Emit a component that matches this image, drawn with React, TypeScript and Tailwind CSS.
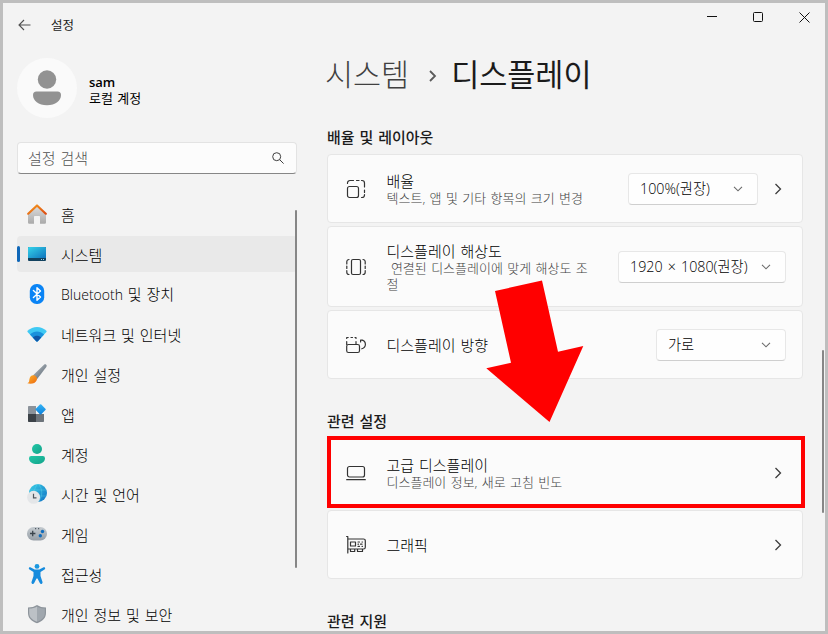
import type { ReactNode } from "react";

type NavItem = {
  id: string;
  label: ReactNode;
  icon: ReactNode;
  active?: boolean;
};

const navItems: NavItem[] = [
  { id: "home", label: "홈", icon: <HomeIcon /> },
  { id: "system", label: "시스템", icon: <SystemIcon />, active: true },
  {
    id: "bluetooth",
    label: (
      <>
        <span className="text-[14px]">Bluetooth</span> 및 장치
      </>
    ),
    icon: <BluetoothIcon />,
  },
  { id: "network", label: "네트워크 및 인터넷", icon: <NetworkIcon /> },
  { id: "personalization", label: "개인 설정", icon: <BrushIcon /> },
  { id: "apps", label: "앱", icon: <AppsIcon /> },
  { id: "accounts", label: "계정", icon: <AccountIcon /> },
  { id: "time", label: "시간 및 언어", icon: <TimeIcon /> },
  { id: "gaming", label: "게임", icon: <GameIcon /> },
  { id: "accessibility", label: "접근성", icon: <AccessibilityIcon /> },
  { id: "privacy", label: "개인 정보 및 보안", icon: <ShieldIcon /> },
];

function HomeIcon() {
  return (
    <svg width="20" height="20" viewBox="0 0 20 20">
      <defs>
        <linearGradient id="homeWall" x1="0" y1="0" x2="0" y2="1">
          <stop offset="0" stopColor="#dedede" />
          <stop offset="1" stopColor="#aaaaaa" />
        </linearGradient>
        <linearGradient id="homeRoof" x1="0" y1="0" x2="1" y2="1">
          <stop offset="0" stopColor="#f59a1d" />
          <stop offset="1" stopColor="#dd4b12" />
        </linearGradient>
      </defs>
      <path
        d="M1 9.5 10 1.5l9 8V18.5a1.2 1.2 0 0 1-1.2 1.2H13v-6.9a.8.8 0 0 0-.8-.8H7.8a.8.8 0 0 0-.8.8v6.9H2.2A1.2 1.2 0 0 1 1 18.5Z"
        fill="url(#homeWall)"
      />
      <path
        d="M1.2 9.7 10 1.5l8.8 8.2"
        fill="none"
        stroke="url(#homeRoof)"
        strokeWidth="2.2"
        strokeLinecap="round"
        strokeLinejoin="round"
      />
    </svg>
  );
}

function SystemIcon() {
  return (
    <svg width="20" height="20" viewBox="0 0 20 20">
      <defs>
        <linearGradient id="screen" x1="0" y1="0" x2="1" y2="1">
          <stop offset="0" stopColor="#35d3ea" />
          <stop offset="1" stopColor="#0f74bd" />
        </linearGradient>
      </defs>
      <rect x="1" y="3" width="18" height="14" rx="1" fill="#12425f" />
      <path d="M2 3h16a1 1 0 0 1 1 1v10H1V4a1 1 0 0 1 1-1Z" fill="url(#screen)" />
      <path d="M14 15h1v1h-1zM16 15h1v1h-1z" fill="#9ed4ea" />
    </svg>
  );
}

function BluetoothIcon() {
  return (
    <svg width="20" height="20" viewBox="0 0 20 20">
      <rect x="2.800" y="0" width="14.400" height="20" rx="6.800" fill="#0a84f5" />
      <path
        d="M6.400 6.500 13.500 13 10 16.300V3.700L13.500 7l-7.100 6.500"
        fill="none"
        stroke="#fff"
        strokeWidth="1.400"
        strokeLinejoin="round"
        strokeLinecap="round"
      />
    </svg>
  );
}

function NetworkIcon() {
  return (
    <svg width="20" height="20" viewBox="0 0 20 20">
      <path
        d="M.6 6.800C5.700 1.700 14.300 1.700 19.400 6.800a.9.9 0 0 1 0 1.200L11 17a1.400 1.400 0 0 1-2 0L.6 8a.9.9 0 0 1 0-1.200Z"
        fill="#3fc9f3"
      />
      <path d="M3 10.400c4-4 10-4 14 0L11 17a1.400 1.400 0 0 1-2 0Z" fill="#1a91dc" />
      <path d="M5.800 13.500c2.300-2.400 6.100-2.400 8.400 0L11 17a1.400 1.400 0 0 1-2 0Z" fill="#0f57a8" />
    </svg>
  );
}

function BrushIcon() {
  return (
    <svg width="20" height="20" viewBox="0 0 20 20">
      <defs>
        <linearGradient id="handle" x1="0" y1="0" x2="1" y2="1">
          <stop offset="0" stopColor="#b8c0c7" />
          <stop offset="1" stopColor="#596570" />
        </linearGradient>
        <linearGradient id="bristle" x1="0" y1="0" x2="1" y2="1">
          <stop offset="0" stopColor="#ffb52b" />
          <stop offset="1" stopColor="#ec6810" />
        </linearGradient>
      </defs>
      <path d="M5.900 11.400 17 .8c1.600-1.300 3.500.5 2.300 2.100L10.200 15Z" fill="url(#handle)" />
      <path
        d="M6.400 11.200c2.800.2 4.300 2.600 3.300 5C8.400 19.500 4.200 20.300.3 19.300c2.200-1 1.700-2 2.100-4 .5-2.700 1.900-4.200 4-4.100Z"
        fill="url(#bristle)"
      />
    </svg>
  );
}

function AppsIcon() {
  return (
    <svg width="20" height="20" viewBox="0 0 20 20">
      <defs>
        <linearGradient id="appTile" x1="0" y1="0" x2="1" y2="1">
          <stop offset="0" stopColor="#36b5f5" />
          <stop offset="1" stopColor="#0a7fdc" />
        </linearGradient>
      </defs>
      <path d="M1 2.700A.8.8 0 0 1 1.800 2H9v8H1Z" fill="#8b929a" />
      <path d="M1 10h8v8H1.800a.8.8 0 0 1-.8-.8Z" fill="#3c4248" />
      <path d="M9 10h8v7.200a.8.8 0 0 1-.8.8H9Z" fill="#6d747b" />
      <rect x="9.700" y="1.500" width="7.800" height="7.800" rx="1" transform="rotate(45 13.600 5.400)" fill="url(#appTile)" />
    </svg>
  );
}

function AccountIcon() {
  return (
    <svg width="20" height="20" viewBox="0 0 20 20">
      <defs>
        <linearGradient id="person" x1="0" y1="0" x2="1" y2="1">
          <stop offset="0" stopColor="#22c7a6" />
          <stop offset="1" stopColor="#14a38b" />
        </linearGradient>
      </defs>
      <circle cx="10" cy="5" r="5" fill="url(#person)" />
      <path
        d="M4.200 12h11.600A2.200 2.200 0 0 1 18 14.200C18 18 14.500 20 10 20s-8-2-8-5.800A2.200 2.200 0 0 1 4.200 12Z"
        fill="url(#person)"
      />
    </svg>
  );
}

function TimeIcon() {
  return (
    <svg width="20" height="20" viewBox="0 0 20 20">
      <defs>
        <linearGradient id="globe" x1="0" y1="0" x2="1" y2="1">
          <stop offset="0" stopColor="#3bd0e6" />
          <stop offset="1" stopColor="#1272c4" />
        </linearGradient>
      </defs>
      <circle cx="11" cy="9" r="9" fill="url(#globe)" />
      <path
        d="M3 6h16M3 12h16M11 0c-5 4-5 13 0 18M11 0c5 4 5 13 0 18"
        fill="none"
        stroke="#69dcee"
        strokeWidth=".6"
        opacity=".6"
      />
      <circle cx="6.600" cy="13.300" r="6.500" fill="#e4e6e8" />
      <path d="M6.500 9.800v4h3" fill="none" stroke="#50565c" strokeWidth="1.200" />
    </svg>
  );
}

function GameIcon() {
  return (
    <svg width="20" height="20" viewBox="0 0 20 20">
      <defs>
        <linearGradient id="pad" x1="0" y1="0" x2="0" y2="1">
          <stop offset="0" stopColor="#c5cbd0" />
          <stop offset="1" stopColor="#969ea6" />
        </linearGradient>
      </defs>
      <rect x="0" y="3" width="20" height="13.500" rx="6.500" fill="url(#pad)" />
      <path d="M5.700 6.800v5.400M3 9.500h5.400" stroke="#3b444c" strokeWidth="1.300" />
      <path d="M8 4h1.200v1.200H8zM11 4h1.200v1.200H11z" fill="#535d66" />
      <circle cx="15.500" cy="7.500" r="1.700" fill="#0f6cbd" />
      <circle cx="13.300" cy="11.800" r="1.700" fill="#0f6cbd" />
    </svg>
  );
}

function AccessibilityIcon() {
  return (
    <svg width="20" height="20" viewBox="0 0 20 20">
      <circle cx="10" cy="2.400" r="2.400" fill="#1b98e0" />
      <path
        d="M3.400 3.300 7.700 5.500h4.600l4.300-2.200c1.500-.5 2.200 1.500.9 2.200L13.500 8v4l2 6c.4 1.900-1.900 2.700-2.700.9L10.500 14.500h-1L7.200 18.900c-.8 1.800-3.100 1-2.700-.9L6.500 12V8L2.500 5.500c-1.300-.7-.6-2.700.9-2.200Z"
        fill="#168bdd"
      />
    </svg>
  );
}

function ShieldIcon() {
  return (
    <svg width="20" height="20" viewBox="0 0 20 20">
      <path
        d="M10 1c2.600 1.700 5.500 2.500 9 2.500V9c0 5-3.500 8.300-9 10.200C4.500 17.300 1 14 1 9V3.500C4.500 3.500 7.400 2.700 10 1Z"
        fill="#8d949b"
      />
      <path d="M10 2.400v15.400C5.200 16 2.200 13.300 2.200 9V4.600C5.200 4.500 7.700 3.800 10 2.400Z" fill="#bcc1c6" />
      <path d="M10 2.400v15.400c4.800-1.800 7.800-4.500 7.800-8.800V4.600c-3-.1-5.500-.8-7.800-2.200Z" fill="#a0a7ae" />
    </svg>
  );
}

function LineIcon({ children }: { children: ReactNode }) {
  return (
    <svg
      width="20"
      height="20"
      viewBox="0 0 20 20"
      fill="none"
      stroke="#333"
      strokeWidth="1.200"
      strokeLinecap="round"
      strokeLinejoin="round"
    >
      {children}
    </svg>
  );
}

function ScaleIcon() {
  return (
    <LineIcon>
      <rect x="1.500" y="7.500" width="11" height="11" rx="2" />
      <path d="M1.500 4.500V4A2.500 2.500 0 0 1 4 1.500h3.500M10.500 1.500H13M15.500 1.500h.5A2.500 2.500 0 0 1 18.500 4v4M18.500 11v2.500M18.500 15.500v.5a2.500 2.500 0 0 1-2.500 2.500h-.5" />
    </LineIcon>
  );
}

function ResolutionIcon() {
  return (
    <LineIcon>
      <rect x="5.500" y="2.500" width="9" height="15" rx="1.500" />
      <path d="M3 2.500A2.200 2.200 0 0 0 .8 4.700V7M.8 9v2.500M.8 13.500v1.800A2.200 2.200 0 0 0 3 17.500M17 2.500a2.200 2.200 0 0 1 2.200 2.200V7M19.200 9v2.500M19.200 13.500v1.800a2.200 2.200 0 0 1-2.200 2.200" />
    </LineIcon>
  );
}

function OrientationIcon() {
  return (
    <LineIcon>
      <rect x=".7" y="9.500" width="12.800" height="8" rx="1.800" />
      <path d="M.7 9.500V6.500M.7 3.500V2.500h1.500M5 2.500h1.500M9 2.500h1v1M10 6.500v2.500" />
      <path d="M14.600 7V5h2M14.800 5.200c2.500-.4 4.600 1.200 4.600 4 0 2.300-1.400 3.900-3.600 4.600" />
    </LineIcon>
  );
}

function LaptopIcon() {
  return (
    <LineIcon>
      <rect x="1.500" y="3.500" width="17" height="10.500" rx="2" />
      <path d="M.7 16.700h18.600" />
    </LineIcon>
  );
}

function GraphicsIcon() {
  return (
    <LineIcon>
      <path d="M.6 1.500h1.200v16.500M1.800 4h15.700a1.800 1.800 0 0 1 1.800 1.800v6.400a1.800 1.800 0 0 1-1.800 1.800H1.800M4.500 14v2.500h4.200V14M11.500 14v2.500h5V14" />
      <rect x="4.500" y="7" width="5" height="4" />
      <path d="M12 7h1.500M16 7h.5M12 9.200h.5M14.500 9.200H16M12 11.300h1.500M16 11.300h.5" />
    </LineIcon>
  );
}

function ChevronRight() {
  return (
    <svg width="8" height="12" viewBox="0 0 8 12" fill="none" stroke="#3c3c3c" strokeWidth="1.300">
      <path d="m1.500 1 5 5-5 5" />
    </svg>
  );
}

function Select({ label, className }: { label: string; className: string }) {
  return (
    <button
      type="button"
      className={`flex h-8 shrink-0 items-center justify-between rounded-[4px] border border-[#e7e7e7] border-b-[#cfcfcf] bg-[#fefefe] pr-[14px] pl-[11px] text-[14.250px] [word-spacing:1.5px] whitespace-pre text-black ${className}`}
    >
      <span className="pt-px">{label}</span>
      <svg width="10" height="6" viewBox="0 0 10 6" fill="none" stroke="#6a6a6a" strokeWidth="1.100">
        <path d="m1 .8 4 4 4-4" />
      </svg>
    </button>
  );
}

type CardProps = {
  icon: ReactNode;
  title: string;
  description?: string;
  className: string;
  children?: ReactNode;
};

function SettingCard({ icon, title, description, className, children }: CardProps) {
  return (
    <div className={`flex items-center rounded-[4px] border border-[#e6e6e6] bg-[#fbfbfb] pl-[18px] ${className}`}>
      <span className="mr-[20.500px] shrink-0">{icon}</span>
      <div className="flex-1 pt-px">
        <div className="text-[15px] leading-[17px] text-black">{title}</div>
        {description && (
          <div className="text-[13px] leading-4 whitespace-pre text-[#3f3f3f]">{description}</div>
        )}
      </div>
      {children}
    </div>
  );
}

function TitleBar() {
  return (
    <header className="flex h-[47px] shrink-0 justify-between">
      <div className="flex h-11 items-center pl-[15px]">
        <svg width="13" height="12" viewBox="0 0 13 12" fill="none" stroke="#505050" strokeWidth="1.100">
          <path d="M12.500 6H1M6 1 1 6l5 5" />
        </svg>
        <span className="ml-5 pt-0.5 text-[12.500px] font-normal">설정</span>
      </div>
      <div className="flex h-7 items-center gap-9 pr-[15px]">
        <svg width="10" height="10" viewBox="0 0 10 10" stroke="#111">
          <path d="M0 4.500h10" />
        </svg>
        <svg width="10" height="10" viewBox="0 0 10 10" fill="none" stroke="#111">
          <rect x=".5" y=".5" width="9" height="9" rx="1" />
        </svg>
        <svg width="11" height="11" viewBox="0 0 11 11" fill="none" stroke="#111">
          <path d="m.5.5 10 10M10.500.5l-10 10" />
        </svg>
      </div>
    </header>
  );
}

function Sidebar() {
  return (
    <aside className="w-[294px] shrink-0 pt-2 pl-[14px]">
      <div className="flex h-[60px] items-center">
        <div className="flex size-[60px] items-center justify-center rounded-full bg-[#fafafa]">
          <svg width="30" height="36" viewBox="0 0 30 36" fill="#929292">
            <circle cx="15" cy="9.500" r="9.200" />
            <path d="M4.500 21.500h21a3.500 3.500 0 0 1 3.500 3.500c0 6-5.500 10.200-14 10.200S1 31 1 25a3.500 3.500 0 0 1 3.500-3.500Z" />
          </svg>
        </div>
        <div className="ml-3 pt-[3px] text-[13px] leading-4 text-black">
          <div className="font-semibold">sam</div>
          <div className="font-normal">로컬 계정</div>
        </div>
      </div>

      {/* Search */}
      <div className="mt-6 flex h-8 items-center justify-between rounded-[4px] border border-[#e3e3e3] border-b-[#868686] bg-[#fcfcfc] pr-3 pl-[10px]">
        <span className="text-[15px] text-[#505050]">설정 검색</span>
        <svg width="12" height="12" viewBox="0 0 12 12" fill="none" stroke="#404040">
          <circle cx="4.700" cy="4.700" r="4" />
          <path d="m7.600 7.600 4 4" />
        </svg>
      </div>

      <div className="mt-[22px] flex">
        <nav className="flex flex-1 flex-col gap-1">
          {navItems.map((item) => (
            <div
              key={item.id}
              className={`flex h-9 items-center rounded-[4px] ${item.active ? "bg-[#e9e9e9]" : ""}`}
            >
              <span className={`h-4 w-[3px] rounded-full ${item.active ? "bg-[#0f67b8]" : ""}`} />
              <span className="ml-[7px]">{item.icon}</span>
              <span className="ml-[14px] pt-[1.500px] text-[15px] leading-5 whitespace-nowrap text-black">{item.label}</span>
            </div>
          ))}
        </nav>
        <div className="mt-[14px] -ml-0.5 h-[358px] w-0.5 rounded-full bg-[#868686]" />
      </div>
    </aside>
  );
}

function Content() {
  return (
    <main className="ml-[30px] w-[476px] shrink-0">
      <h1 className="-ml-0.5 flex h-12 items-center text-[30.500px] leading-none whitespace-nowrap">
        <span className="text-[#404040]">시스템</span>
        <svg className="mt-1 mr-[14px] ml-5" width="8" height="12" viewBox="0 0 8 12" fill="none" stroke="#5a5a5a" strokeWidth="1.800">
          <path d="m1 1 5 5-5 5" />
        </svg>
        <span className="font-normal text-[#1b1b1b]">디스플레이</span>
      </h1>

      <h2 className="mt-[29px] h-5 text-[15px] leading-5 font-medium">배율 및 레이아웃</h2>
      <div className="mt-[7px] flex flex-col gap-[3px]">
        <SettingCard
          icon={<ScaleIcon />}
          title="배율"
          description="텍스트, 앱 및 기타 항목의 크기 변경"
          className="h-[69px]"
        >
          <Select label="100%(권장)" className="w-[130px]" />
          <span className="mr-5 ml-4">
            <ChevronRight />
          </span>
        </SettingCard>
        <SettingCard
          icon={<ResolutionIcon />}
          title="디스플레이 해상도"
          description={" 연결된 디스플레이에 맞게 해상도 조\n절"}
          className="h-[81px]"
        >
          <Select label="1920 × 1080(권장)" className="mr-4 w-[168px]" />
        </SettingCard>
        <SettingCard icon={<OrientationIcon />} title="디스플레이 방향" className="h-[69px]">
          <Select label="가로" className="mr-4 w-[130px]" />
        </SettingCard>
      </div>

      <h2 className="mt-8 h-5 text-[15px] leading-5 font-medium">관련 설정</h2>
      <div className="mt-[7px] flex flex-col gap-[3px]">
        <div className="relative">
          <SettingCard
            icon={<LaptopIcon />}
            title="고급 디스플레이"
            description="디스플레이 정보, 새로 고침 빈도"
            className="h-[69px]"
          >
            <span className="mr-5">
              <ChevronRight />
            </span>
          </SettingCard>
          {/* Highlight around the advanced display row */}
          <div className="absolute -top-0.5 left-0 h-[72px] w-[478px] border-4 border-[#ff0000]" />
        </div>
        <SettingCard icon={<GraphicsIcon />} title="그래픽" className="h-[69px]">
          <span className="mr-5">
            <ChevronRight />
          </span>
        </SettingCard>
      </div>

      <h2 className="mt-8 h-5 text-[15px] leading-5 font-medium">관련 지원</h2>
    </main>
  );
}

export default function App() {
  return (
    <div className="relative flex h-[634px] w-[828px] flex-col overflow-hidden border-[3px] border-[#bebebe] bg-[#f3f3f3] font-['Open_Sans','Noto_Sans_CJK_KR',sans-serif] font-light [word-spacing:1px] text-[#1b1b1b]">
      <TitleBar />
      <div className="flex min-h-0 flex-1">
        <Sidebar />
        <Content />
        <div className="mt-[300px] ml-[19px] h-[163px] w-0.5 shrink-0 rounded-full bg-[#868686]" />
      </div>

      {/* Arrow pointing at the advanced display row */}
      <svg className="absolute top-[277px] left-[483px]" width="98" height="143" viewBox="0 0 98 143">
        <path d="M9 11 56 .5 72 71.700 97.300 66 63.500 142 .3 88.300 25 82.700Z" fill="#ff0000" />
      </svg>
    </div>
  );
}
